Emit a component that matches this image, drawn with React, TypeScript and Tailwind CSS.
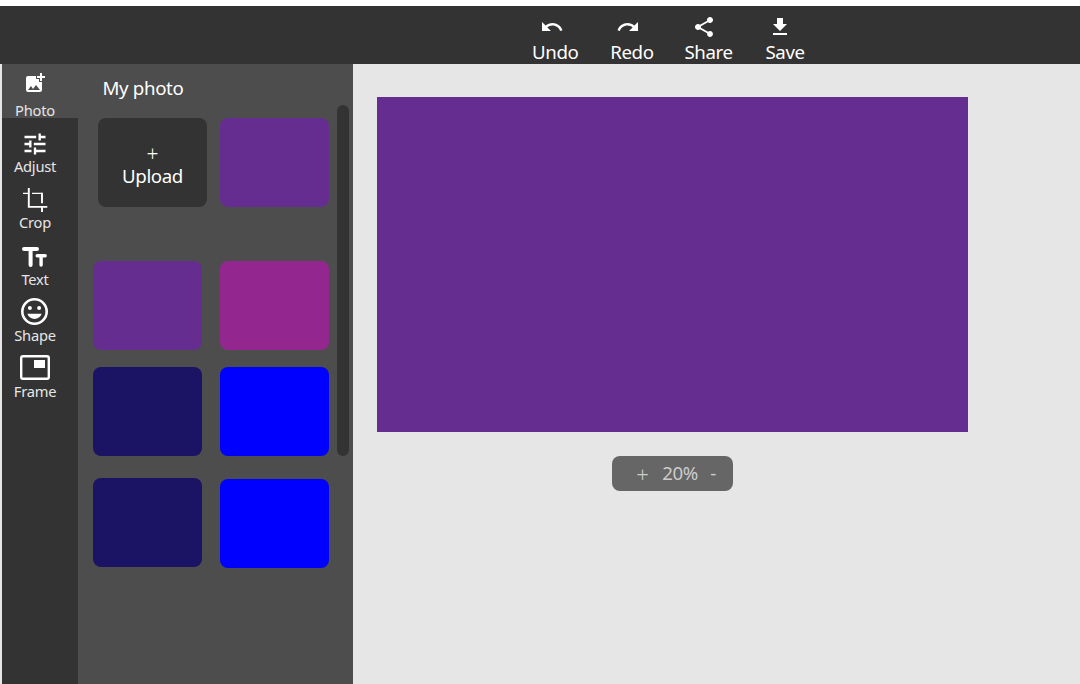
import type { ReactNode } from "react";

const UndoIcon = () => (
  <svg className="size-6" viewBox="0 0 24 24" fill="currentColor">
    <path d="M12.5 8c-2.65 0-5.05.99-6.9 2.6L2 7v9h9l-3.62-3.62c1.39-1.16 3.16-1.88 5.12-1.88 3.54 0 6.55 2.31 7.6 5.5l2.37-.78C21.08 11.03 17.15 8 12.5 8z" />
  </svg>
);
const RedoIcon = () => (
  <svg className="size-6" viewBox="0 0 24 24" fill="currentColor">
    <path d="M18.4 10.6C16.55 8.99 14.15 8 11.5 8c-4.65 0-8.58 3.03-9.96 7.22L3.9 16c1.05-3.19 4.05-5.5 7.6-5.5 1.95 0 3.73.72 5.12 1.88L13 16h9V7l-3.6 3.6z" />
  </svg>
);
const ShareIcon = () => (
  <svg className="size-6" viewBox="0 0 24 24" fill="currentColor">
    <path d="M18 16.08c-.76 0-1.44.3-1.96.77L8.91 12.7c.05-.23.09-.46.09-.7s-.04-.47-.09-.7l7.05-4.11c.54.5 1.25.81 2.04.81 1.66 0 3-1.34 3-3s-1.34-3-3-3-3 1.34-3 3c0 .24.04.47.09.7L8.04 9.81C7.5 9.31 6.79 9 6 9c-1.66 0-3 1.34-3 3s1.34 3 3 3c.79 0 1.5-.31 2.04-.81l7.12 4.16c-.05.21-.08.43-.08.65 0 1.61 1.31 2.92 2.92 2.92s2.92-1.31 2.92-2.92-1.31-2.92-2.92-2.92z" />
  </svg>
);
const SaveIcon = () => (
  <svg className="size-6" viewBox="0 0 24 24" fill="currentColor">
    <path d="M19 9h-4V3H9v6H5l7 7 7-7zM5 18v2h14v-2H5z" />
  </svg>
);
const PhotoIcon = () => (
  <svg className="size-6 shrink-0" viewBox="0 0 24 24" fill="currentColor">
    <path d="M19 7v2.99s-1.99.01-2 0V7h-3s.01-1.99 0-2h3V2h2v3h3v2h-3zm-3 4V8h-3V5H5c-1.1 0-2 .9-2 2v12c0 1.1.9 2 2 2h12c1.1 0 2-.9 2-2v-8h-3zM5 19l3-4 2 3 3-4 4 5H5z" />
  </svg>
);
const AdjustIcon = () => (
  <svg className="size-7 shrink-0" viewBox="0 0 24 24" fill="currentColor">
    <path d="M3 17v2h6v-2H3zM3 5v2h10V5H3zm10 16v-2h8v-2h-8v-2h-2v6h2zM7 9v2H3v2h4v2h2V9H7zm14 4v-2H11v2h10zm-6-4h2V7h4V5h-4V3h-2v6z" />
  </svg>
);
const CropIcon = () => (
  <svg className="size-[26px] shrink-0" viewBox="0 0 26 26" fill="none" stroke="currentColor">
    <path strokeWidth="1.4" d="M1 6.4h5M10 6.4h10" />
    <path strokeWidth="1.9" d="M6.8 1v18.9h18.5M20 5.7v10.6M20 20v5" />
  </svg>
);
const TextIcon = () => (
  <svg className="h-5 w-[26px] shrink-0" viewBox="0 0 26 20" fill="none" stroke="currentColor" strokeLinecap="round">
    <path strokeWidth="4" d="M2 2h13M8.6 2v16" />
    <path strokeWidth="3.4" d="M15.2 8.7h8M19.1 8.7v9.4" />
  </svg>
);
const ShapeIcon = () => (
  <svg className="mr-px mb-1 h-[27px] w-[27px] shrink-0" viewBox="0 0 27 27" fill="currentColor">
    <circle cx="13.5" cy="13.5" r="12.2" fill="none" stroke="currentColor" strokeWidth="2.6" />
    <circle cx="8.9" cy="10" r="2" />
    <circle cx="18.1" cy="10" r="2" />
    <path d="M6.4 15.7h14.2c-1 3.2-3.8 5.2-7.1 5.2s-6.1-2-7.1-5.2z" />
  </svg>
);
const FrameIcon = () => (
  <svg className="mb-1 h-[25px] w-[30px] shrink-0" viewBox="0 0 30 25">
    <rect x="1.2" y="1.2" width="27.6" height="22.6" rx="1.8" fill="none" stroke="currentColor" strokeWidth="2.4" />
    <path fill="currentColor" d="M14 5h11v8H14z" />
  </svg>
);

function Action({ label, iconClass, children }: { label: string; iconClass: string; children: ReactNode }) {
  return (
    <button className="flex flex-col items-center pt-[9px]">
      <span className={iconClass}>{children}</span>
      <span className="mt-px text-[18.7px] leading-6 tracking-[-0.4px]">{label}</span>
    </button>
  );
}

function Tool({ label, className, children }: { label: string; className: string; children: ReactNode }) {
  return (
    <button className={`flex w-full flex-col items-center justify-end pr-[10px] ${className}`}>
      <span className="flex h-6 items-center justify-center">{children}</span>
      <span className="text-[14.7px] leading-5 tracking-[-0.25px] text-[#e6e6e6]">{label}</span>
    </button>
  );
}

const thumb = "h-[89px] w-[109px] rounded-lg";

export default function App() {
  return (
    <div className="flex h-[684px] w-[1080px] flex-col overflow-hidden bg-white pt-1.5 font-['Noto_Sans',sans-serif] text-white">
      <header className="grid h-[58px] shrink-0 grid-cols-[repeat(4,76.6px)] bg-[#333333] pl-[517px]">
        <Action label="Undo" iconClass="mr-[7px]"><UndoIcon /></Action>
        <Action label="Redo" iconClass="mr-[7px]"><RedoIcon /></Action>
        <Action label="Share" iconClass="mr-[9px]"><ShareIcon /></Action>
        <Action label="Save" iconClass="mr-[10px]"><SaveIcon /></Action>
      </header>
      <div className="flex min-h-0 flex-1 bg-[#e6e6e6] pl-0.5">
        <nav className="w-[76px] shrink-0 bg-[#333333]">
          <div className="mb-0.5 h-[54px] bg-[#4d4d4d] pt-[7px]">
            <Tool label="Photo" className="gap-[5px]"><PhotoIcon /></Tool>
          </div>
          <Tool label="Adjust" className="h-14"><AdjustIcon /></Tool>
          <Tool label="Crop" className="h-14"><CropIcon /></Tool>
          <Tool label="Text" className="h-[57px]"><TextIcon /></Tool>
          <Tool label="Shape" className="h-14"><ShapeIcon /></Tool>
          <Tool label="Frame" className="h-14"><FrameIcon /></Tool>
        </nav>
        <aside className="flex w-[275px] shrink-0 bg-[#4d4d4d] pl-[15px]">
          <div className="w-[236px]">
            <h2 className="mt-3 ml-[9.5px] h-[42px] text-[18.7px] leading-6 tracking-[-0.35px]">My photo</h2>
            <div className="flex justify-between pl-[5px]">
              <button className={`${thumb} flex flex-col items-center bg-[#333333] pt-6 text-[18.7px]`}>
                <span className="text-[21px] leading-6 font-light">+</span>
                <span className="leading-5 tracking-[-0.4px]">Upload</span>
              </button>
              <div className={`${thumb} bg-[#662d91]`} />
            </div>
            <div className="mt-[54px] flex justify-between">
              <div className={`${thumb} bg-[#662d91]`} />
              <div className={`${thumb} bg-[#93278f]`} />
            </div>
            <div className="mt-[17px] flex justify-between">
              <div className={`${thumb} bg-[#1b1464]`} />
              <div className={`${thumb} bg-[#0000ff]`} />
            </div>
            <div className="mt-[22px] flex justify-between">
              <div className={`${thumb} bg-[#1b1464]`} />
              <div className={`${thumb} mt-px bg-[#0000ff]`} />
            </div>
          </div>
          <div className="mt-[41px] ml-2 h-[351px] w-3 rounded-full bg-[#333333]" />
        </aside>
        <main className="pt-[33px] pl-6">
          <div className="flex w-[591px] flex-col items-center">
            <div className="h-[335px] w-full bg-[#662d91]" />
            <div className="mt-6 flex h-[34.5px] w-[120.5px] items-center rounded-lg bg-[#666666] pl-6 text-[18.7px] leading-6 text-[#cccccc]">
              <button className="w-[26px] pt-0.5 text-left text-[22px] leading-6 font-light">+</button>
              <span className="w-12 tracking-[-0.4px]">20%</span>
              <button>-</button>
            </div>
          </div>
        </main>
      </div>
    </div>
  );
}
